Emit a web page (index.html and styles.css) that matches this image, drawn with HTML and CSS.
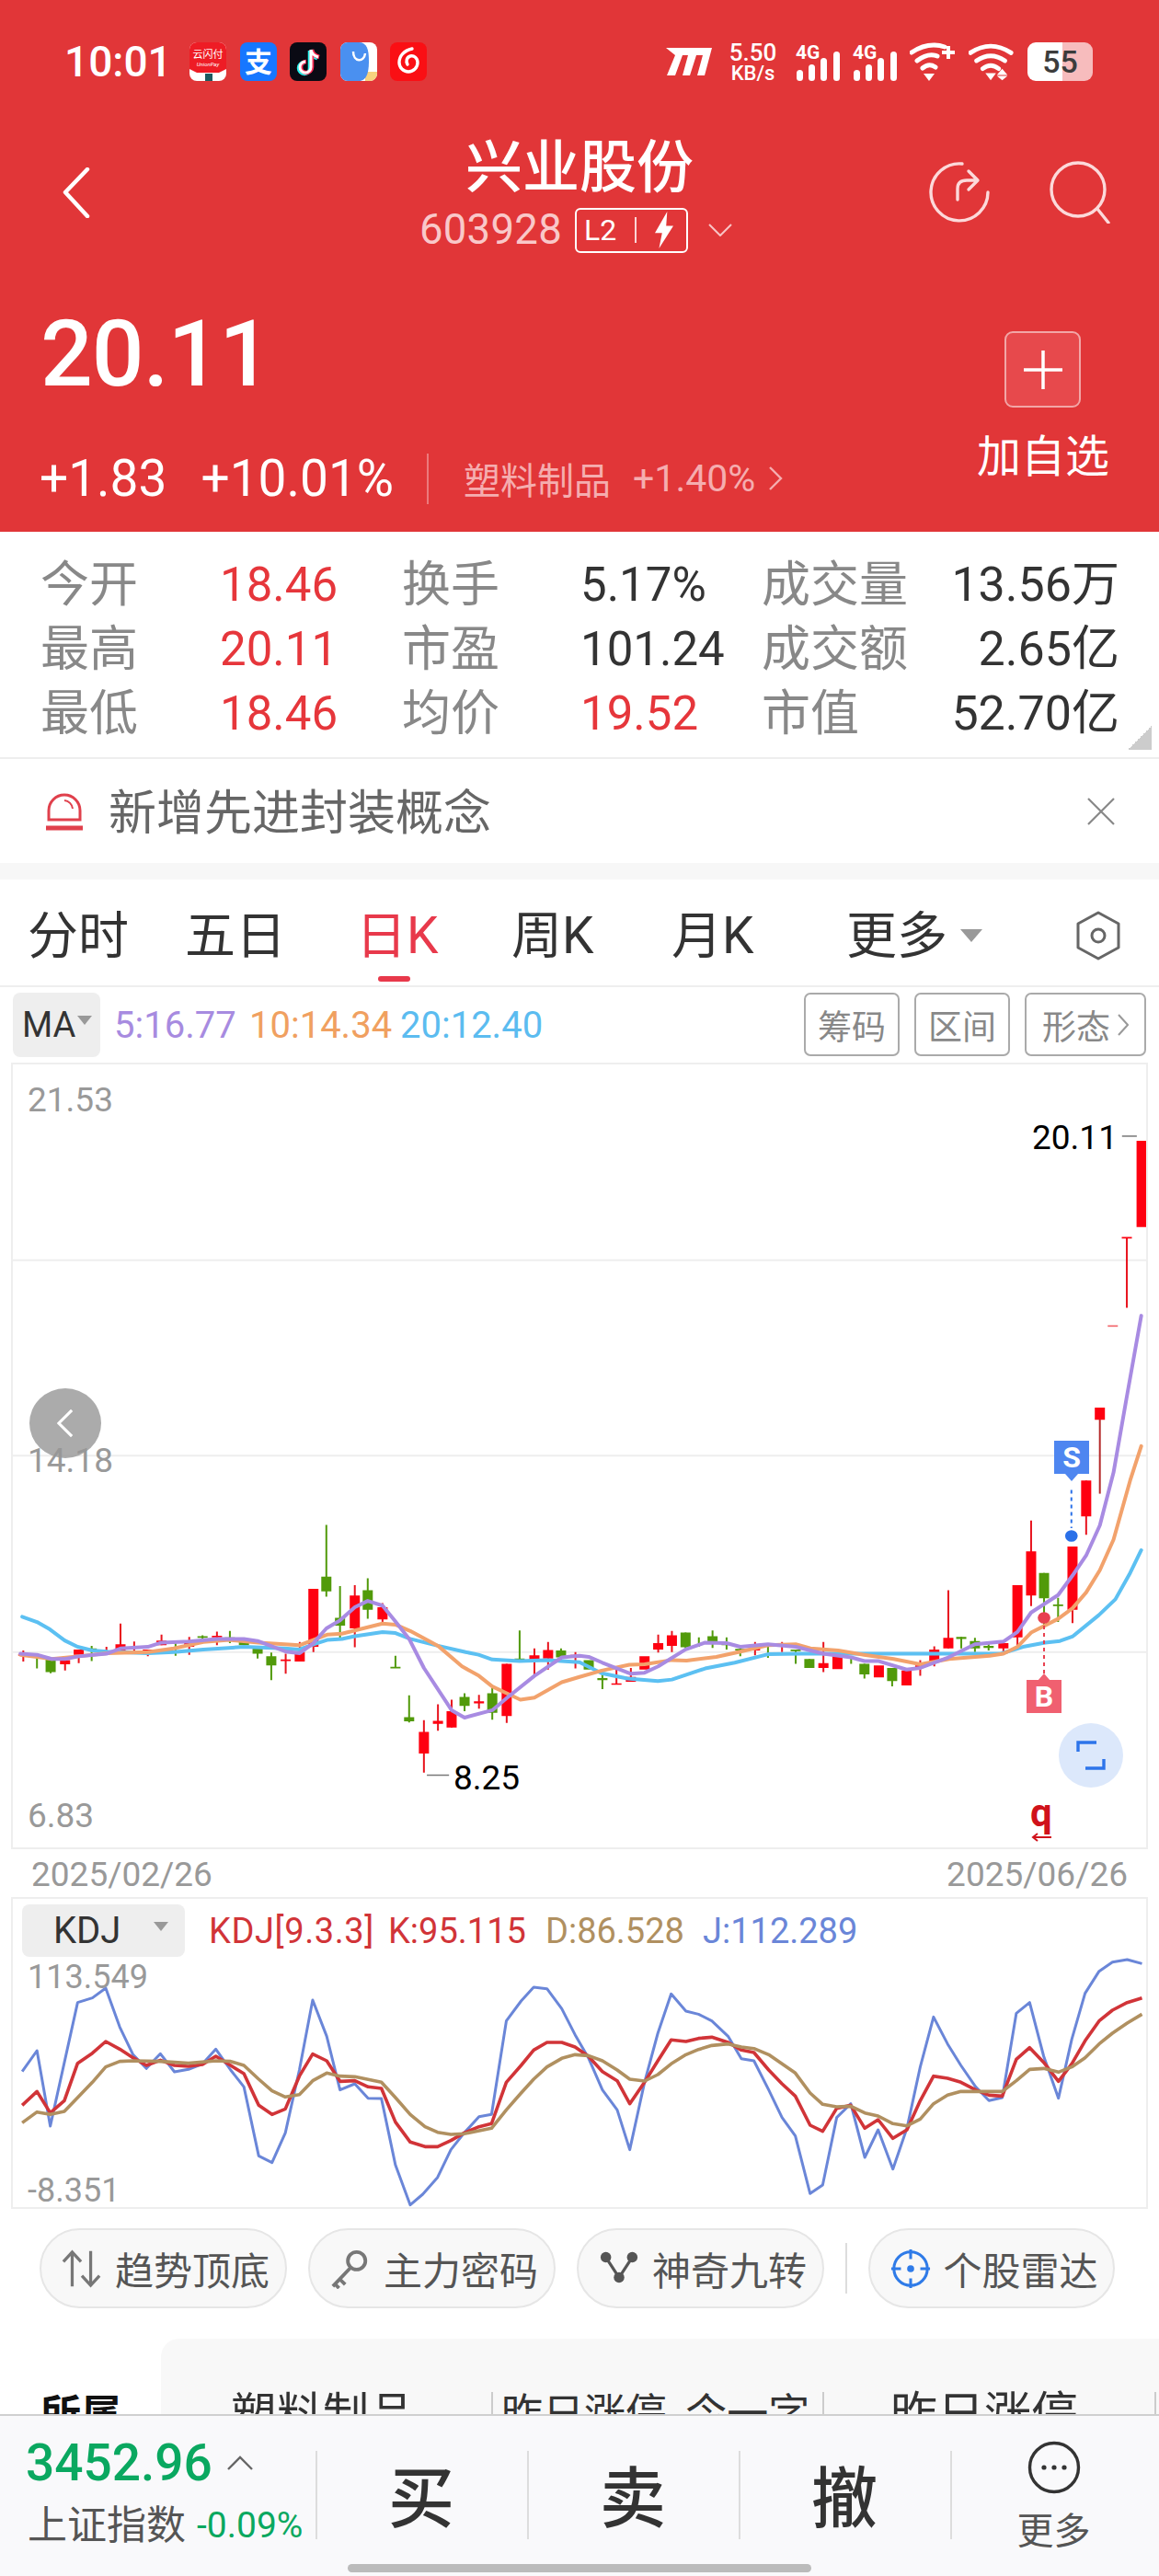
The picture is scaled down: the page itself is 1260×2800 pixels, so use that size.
FILE: index.html
```html
<!DOCTYPE html>
<html lang="zh-CN">
<head>
<meta charset="utf-8">
<title>兴业股份</title>
<link rel="stylesheet" href="styles.css">
</head>
<body>
<div class="page">
  <header class="hero">
    <div class="status">
      <span class="clock">10:01</span>
      <div class="apps">
        <svg class="app" viewBox="0 0 40 42"><rect width="40" height="42" rx="8" fill="#fff"/><path d="M0 8a8 8 0 0 1 8-8h24a8 8 0 0 1 8 8v21l-8 4H8l-8-4z" fill="#ee1c25"/><text x="20" y="17" class="app-t1">云闪付</text><text x="20" y="26" class="app-t2">UnionPay</text><rect x="17" y="34" width="8" height="8" fill="#1c5a60"/></svg>
        <svg class="app" viewBox="0 0 40 42"><rect width="40" height="42" rx="8" fill="#1677ff"/><text x="20" y="32" class="app-t3">支</text></svg>
        <svg class="app" viewBox="0 0 40 42"><rect width="40" height="42" rx="8" fill="#0a0a14"/><path d="M23 8v19a6 6 0 1 1-6-6M23 8c1 5 4 7 8 8" fill="none" stroke="#25f4ee" stroke-width="4.5" transform="translate(-1 1)"/><path d="M23 8v19a6 6 0 1 1-6-6M23 8c1 5 4 7 8 8" fill="none" stroke="#fe2c55" stroke-width="4.5" transform="translate(1 0)"/><path d="M23 8v19a6 6 0 1 1-6-6M23 8c1 5 4 7 8 8" fill="none" stroke="#fff" stroke-width="3"/></svg>
        <svg class="app" viewBox="0 0 40 42"><rect width="40" height="42" rx="8" fill="#fff"/><path d="M27 32h13v2a8 8 0 0 1-8 8h-5z" fill="#f7d27e"/><path d="M8 0h12c9 0 11 8 11 20s-2 22-11 22H8a8 8 0 0 1-8-8V8a8 8 0 0 1 8-8z" fill="#4a90f0"/><path d="M14 10c0 12 12 12 13 2" fill="none" stroke="#fff" stroke-width="2.5"/></svg>
        <svg class="app" viewBox="0 0 40 42"><rect width="40" height="42" rx="8" fill="#fa0f14"/><path d="M24 7c-9 2-14 8-14 15a10 10 0 0 0 20 0c0-5-4-8-8-7-4 1-5 6-3 9" fill="none" stroke="#fff" stroke-width="3.4" stroke-linecap="round"/></svg>
      </div>
      <div class="sysicons">
        <svg class="sys-logo" viewBox="0 0 50 30"><path d="M0 0H50L42 30H34L40 8H33L26 30H18L24 8H18L10 30H1L10 8Z" fill="#fff"/></svg>
        <svg class="speed" viewBox="0 0 53 42"><text x="26.5" y="20" class="speed-a">5.50</text><text x="26.5" y="41" class="speed-b">KB/s</text></svg>
        <svg class="sig" viewBox="0 0 48 42"><text x="0" y="18" class="sig-t">4G</text><rect x="1" y="30" width="7" height="12" rx="3.5"/><rect x="14" y="24" width="7" height="18" rx="3.5"/><rect x="27" y="17" width="7" height="25" rx="3.5"/><rect x="41" y="10" width="7" height="32" rx="3.5"/></svg>
        <svg class="sig" viewBox="0 0 48 42"><text x="0" y="18" class="sig-t">4G</text><rect x="1" y="30" width="7" height="12" rx="3.5"/><rect x="14" y="24" width="7" height="18" rx="3.5"/><rect x="27" y="17" width="7" height="25" rx="3.5"/><rect x="41" y="10" width="7" height="32" rx="3.5"/></svg>
        <svg class="wifi" viewBox="0 0 50 42"><path d="M2 11Q20 -1 38 5M8 20Q20 11 30 15M14 28Q21 22 28 27" fill="none" stroke="#fff" stroke-width="5" stroke-linecap="round"/><path d="M21 42l-6-8h12z" fill="#fff"/><path d="M35 11H49M42 4V18" stroke="#fff" stroke-width="4"/></svg>
        <svg class="wifi" viewBox="0 0 52 42"><path d="M2 11Q25 -4 48 11M9 20Q25 9 41 20M16 29Q25 22 34 29" fill="none" stroke="#fff" stroke-width="5" stroke-linecap="round"/><path d="M25 42l-6-8h12z" fill="#fff"/><path d="M38 29l6 7H32zM38 42l6-5H32z" fill="#fff"/></svg>
        <div class="battery"><span>55</span></div>
      </div>
    </div>

    <div class="nav">
      <svg class="nav-back" viewBox="0 0 30 55"><path d="M27 2 3 27l24 26" fill="none" stroke="#fff" stroke-width="4.5" stroke-linecap="round" stroke-linejoin="round"/></svg>
      <div class="nav-mid">
        <h1 class="title">兴业股份</h1>
        <div class="code-row">
          <span class="code">603928</span>
          <span class="l2"><span class="l2-t">L2</span><i class="l2-sep"></i><svg class="bolt" viewBox="0 0 20 36"><path d="M13 0 1 21h7L5 36l14-22h-7z" fill="#fff"/></svg></span>
          <svg class="code-chev" viewBox="0 0 26 14"><path d="M1 1l12 12L25 1" fill="none" stroke="#f8c4c5" stroke-width="2"/></svg>
        </div>
      </div>
      <div class="nav-right">
        <svg class="nav-ico" viewBox="0 0 66 68"><path d="M36 3A31 31 0 1 0 64 34" fill="none" stroke="#fcd9da" stroke-width="3.4" stroke-linecap="round"/><path d="M31 42V30Q31 21 41 21H52M43 11l10 10-10 10" fill="none" stroke="#fcd9da" stroke-width="3.4" stroke-linecap="round" stroke-linejoin="round"/></svg>
        <svg class="nav-ico" viewBox="0 0 66 68"><circle cx="31" cy="31" r="29" fill="none" stroke="#fcd9da" stroke-width="3.4"/><path d="M52 52l12 15" stroke="#fcd9da" stroke-width="3.4" stroke-linecap="round"/></svg>
      </div>
    </div>

    <div class="quote">
      <div class="quote-l">
        <div class="price">20.11</div>
        <div class="changes">
          <span class="chg">+1.83</span>
          <span class="chg">+10.01%</span>
          <i class="chg-sep"></i>
          <span class="sector-n">塑料制品</span>
          <span class="sector-v">+1.40%</span>
          <svg class="sector-c" viewBox="0 0 16 28"><path d="M2 2l12 12L2 26" fill="none" stroke="#f5adaf" stroke-width="2.4"/></svg>
        </div>
      </div>
      <div class="quote-r">
        <div class="add-btn"><svg class="add-plus" viewBox="0 0 42 42"><path d="M21 0V42M0 21H42" stroke="#fff" stroke-width="3.5"/></svg></div>
        <div class="add-t">加自选</div>
      </div>
    </div>
  </header>

  <section class="stats">
    <span class="s-l">今开</span><span class="s-v up">18.46</span><span class="s-l">换手</span><span class="s-v">5.17%</span><span class="s-l">成交量</span><span class="s-v end">13.56万</span>
    <span class="s-l">最高</span><span class="s-v up">20.11</span><span class="s-l">市盈</span><span class="s-v">101.24</span><span class="s-l">成交额</span><span class="s-v end">2.65亿</span>
    <span class="s-l">最低</span><span class="s-v up">18.46</span><span class="s-l">均价</span><span class="s-v up">19.52</span><span class="s-l">市值</span><span class="s-v end">52.70亿</span>
    <i class="corner"></i>
  </section>

  <section class="notice">
    <svg class="siren" viewBox="0 0 40 42"><path d="M3 30V20a17 17 0 0 1 34 0v10z" fill="none" stroke="#e0404c" stroke-width="3"/><path d="M20 9a10 10 0 0 1 9 9" fill="none" stroke="#e0404c" stroke-width="2"/><path d="M0 39H40" stroke="#e0404c" stroke-width="5"/></svg>
    <span class="notice-t">新增先进封装概念</span>
    <svg class="notice-x" viewBox="0 0 30 30"><path d="M1 1l28 28M29 1L1 29" stroke="#888" stroke-width="2.2"/></svg>
  </section>
  <div class="band"></div>

  <nav class="tabs">
    <span class="tab">分时</span>
    <span class="tab">五日</span>
    <span class="tab active">日K</span>
    <span class="tab">周K</span>
    <span class="tab">月K</span>
    <span class="tab more">更多<i class="tab-caret"></i></span>
    <svg class="hex" viewBox="0 0 48 54"><path d="M24 2 46 14V40L24 52 2 40V14Z" fill="none" stroke="#666" stroke-width="3" stroke-linejoin="round"/><circle cx="24" cy="27" r="7" fill="none" stroke="#666" stroke-width="3"/></svg>
  </nav>

  <div class="ma-row">
    <div class="pill ma-pill">MA<i class="mini-caret"></i></div>
    <span class="ma5">5:16.77</span><span class="ma10">10:14.34</span><span class="ma20">20:12.40</span>
    <div class="ma-btns">
      <span class="ma-btn">筹码</span>
      <span class="ma-btn">区间</span>
      <span class="ma-btn wide">形态<svg class="ma-chev" viewBox="0 0 12 24"><path d="M1 1l10 11L1 23" fill="none" stroke="#999" stroke-width="2"/></svg></span>
    </div>
  </div>

  <section class="chart">
    <svg class="chart-svg" viewBox="34.8 12.2 3066.4 1482.5" preserveAspectRatio="none">
      <path class="grid" d="M34 383H3102M34 753H3102M34 1125H3102"/>
      <path class="dash" d="M1155 1358H1215"/>
      <g>
        <path class="wick-r" d="M63 1122V1143M176 1138V1160M213 1120V1146M288 1115V1130M326 1071V1125M363 1105V1125M400 1120V1133M437 1092V1112M512 1096V1130M587 1086V1112M773 1128V1166M811 1106V1143M848 1005V1125M960 998V1116M1035 1032V1070M1147 1254V1353M1185 1224V1274M1222 1215V1268M1296 1206V1232M1371 1147V1259M1446 1118V1170M1483 1106V1158M1557 1125V1156"/>
        <path class="wick-g" d="M100 1133V1156M137 1138V1165M248 1113V1142M475 1103V1132M548 1093V1105M622 1085V1108M660 1100V1112M697 1118V1137M734 1126V1178M883 884V1020M920 1000V1098M995 985V1062M1070 1132V1155M1107 1207V1258M1257 1203V1237M1332 1188V1253M1406 1084V1141M1518 1118V1135"/>
        <path class="body-r" d="M63 1129V1132M176 1140V1148M213 1120V1130M326 1110V1125M400 1120V1126M437 1103V1112M512 1108V1115M587 1094V1097M773 1139V1142M811 1125V1143M848 1005V1115M960 1018V1080M1035 1040V1063M1147 1276V1317M1185 1255V1261M1222 1237V1268M1296 1218V1222M1371 1147V1246M1446 1131V1140M1483 1121V1137M1557 1130V1134"/>
        <path class="body-g" d="M137 1138V1163M248 1118V1121M475 1105V1108M548 1095V1098M622 1097V1100M660 1105V1112M697 1118V1128M734 1133V1150M883 982V1010M920 1060V1075M995 1008V1045M1070 1153V1156M1107 1248V1256M1257 1210V1227M1332 1203V1240M1406 1137V1141M1518 1122V1135"/>
      </g>
      <g transform="translate(1568 0)">
        <path class="dash" d="M1468 148H1508"/>
        <path class="wick-r" d="M100 1155V1186M139 1155V1181M213 1092V1126M250 1085V1125M475 1106V1131M548 1106V1125M660 1106V1163M922 1140V1170M960 1114V1152M998 1008V1118M1147 1106V1125M1185 998V1115M1222 876V1038M1334 925V1070M1371 800V903M1481 340V473"/>
        <path class="wick-d" d="M1408 662V825"/>
        <path class="wick-g" d="M62 1165V1195M287 1088V1118M323 1097V1115M360 1084V1117M398 1097V1120M435 1118V1133M510 1108V1136M585 1120V1147M622 1138V1155M735 1135V1147M771 1147V1175M846 1155V1190M1033 1096V1118M1070 1098V1125M1107 1105V1122M1257 975V1075M1295 1022V1068"/>
        <path class="body-r" d="M100 1184V1187M139 1172V1181M176 1133V1158M213 1108V1120M250 1093V1113M475 1118V1122M660 1146V1155M698 1128V1157M810 1150V1173M885 1160V1188M922 1150V1155M960 1120V1143M998 1098V1118M1147 1108V1118M1185 998V1097M1222 934V1018M1334 925V1045M1371 800V868M1408 662V685M1481 339V342M1521 157V320"/>
        <path class="body-l" d="M1443 506V509"/>
        <path class="body-g" d="M25 1140V1158M62 1174V1178M287 1088V1116M360 1095V1108M398 1108V1112M435 1119V1122M585 1120V1123M622 1138V1155M771 1147V1167M846 1155V1180M1033 1096V1100M1070 1104V1118M1107 1113V1117M1257 975V1023M1295 1035V1038"/>
      </g>
      <polyline class="ma-b" points="60,1058 100,1068 135,1082 175,1103 210,1115 250,1122 290,1124 400,1127 470,1125 550,1120 660,1115 770,1118 810,1120 850,1110 885,1102 925,1100 960,1095 1035,1087 1070,1089 1110,1100 1185,1113 1260,1125 1295,1130 1332,1139 1406,1142 1480,1140 1568,1144 1628,1165 1698,1175 1780,1180 1818,1177 1908,1156 1988,1145 2078,1129 2168,1128 2468,1128 2708,1128 2768,1115 2828,1107 2868,1104 2903,1095 2973,1055 3018,1025 3058,975 3088,932"/>
      <polyline class="ma-o" points="55,1130 100,1134 140,1138 210,1133 290,1127 400,1125 470,1118 550,1106 620,1102 700,1107 810,1112 885,1092 925,1090 1035,1071 1070,1073 1110,1085 1185,1113 1250,1152 1296,1170 1332,1190 1371,1203 1408,1215 1446,1211 1520,1182 1568,1172 1628,1160 1703,1149 1744,1148 1818,1140 1858,1141 1938,1134 1998,1125 2078,1112 2153,1110 2193,1118 2268,1122 2338,1130 2418,1138 2490,1148 2568,1138 2678,1132 2715,1128 2753,1115 2790,1088 2863,1062 2902,1042 2939,1012 2976,970 3013,912 3058,800 3088,735"/>
      <polyline class="ma-p" points="55,1128 100,1130 140,1138 176,1138 213,1133 288,1128 326,1118 400,1115 437,1107 512,1105 587,1100 660,1100 697,1104 773,1124 811,1127 848,1108 883,1080 920,1065 960,1040 995,1028 1035,1037 1070,1067 1107,1100 1147,1155 1222,1235 1257,1249 1332,1235 1371,1212 1446,1170 1520,1135 1568,1132 1593,1134 1630,1145 1707,1166 1744,1164 1781,1152 1855,1120 1908,1107 1966,1108 2003,1115 2078,1110 2153,1115 2228,1128 2303,1135 2339,1142 2378,1142 2453,1158 2490,1155 2566,1135 2638,1110 2715,1105 2753,1087 2790,1050 2863,1017 2902,980 2939,942 2976,885 3013,785 3048,645 3088,488"/>
      <g transform="translate(1568 0)">
        <path class="dash-b" d="M1331 818V890"/>
        <ellipse class="dot-b" cx="1331" cy="905" rx="17" ry="11"/>
        <path class="dash-r" d="M1257 1075V1168"/>
        <ellipse class="dot-r" cx="1257" cy="1060" rx="17" ry="11"/>
      </g>
    </svg>
    <span class="c-lab l1">21.53</span>
    <span class="c-lab l2nd">14.18</span>
    <span class="c-lab l3">6.83</span>
    <span class="mark m-low">8.25</span>
    <span class="mark m-high">20.11</span>
    <div class="prev-btn"><svg class="prev-ico" viewBox="0 0 20 36"><path d="M18 2 2 18l16 16" fill="none" stroke="#fff" stroke-width="3.5"/></svg></div>
    <div class="badge b-s">S</div>
    <div class="badge b-b">B</div>
    <div class="full-btn"><svg class="full-ico" viewBox="0 0 32 32"><path d="M2 12V2H22M30 20V30H10" fill="none" stroke="#2d74ea" stroke-width="3.4"/></svg></div>
    <div class="q-mark"><span class="q-t">q</span><svg class="q-arrow" viewBox="0 0 22 10"><path d="M22 5H2M7 1 2 5l5 4" fill="none" stroke="#d0121b" stroke-width="2"/></svg></div>
  </section>

  <div class="dates"><span>2025/02/26</span><span>2025/06/26</span></div>

  <section class="kdj">
    <svg class="kdj-svg" viewBox="17.4 42 1533.2 1005" preserveAspectRatio="none">
      <polyline class="k-j" points="30,605 50,537 68,783 105,380 125,365 143,333 162,460 180,550 198,595 217,547 236,606 255,598 274,580 292,532 312,600 330,655 350,880 368,902 386,805 405,600 423,372 442,490 460,665 480,645 498,692 516,693 535,910 555,1040 572,1005 592,950 610,860 628,805 648,752 665,745 685,440 705,375 722,330 740,335 760,400 778,485 796,560 815,665 835,730 852,860 872,640 890,480 908,352 928,408 945,418 963,440 985,490 1003,563 1020,570 1040,665 1058,755 1076,815 1096,1003 1113,975 1132,755 1151,710 1170,885 1188,795 1208,923 1227,790 1245,590 1263,427 1282,515 1300,585 1320,655 1338,700 1356,690 1375,415 1393,380 1412,555 1432,692 1450,500 1468,350 1487,278 1505,248 1525,240 1545,253"/>
      <polyline class="k-k" points="30,715 50,670 68,740 87,700 105,578 125,545 143,507 162,532 180,560 198,585 217,568 236,585 255,588 274,582 292,555 312,585 330,612 350,715 368,745 386,727 405,620 423,548 442,570 460,637 480,635 498,655 516,660 535,770 555,835 575,850 592,850 610,830 628,805 648,785 665,775 685,640 705,585 722,535 740,510 760,510 778,525 796,555 815,605 835,635 852,710 872,640 890,570 908,502 928,507 945,497 963,493 985,510 1003,535 1020,543 1040,600 1058,645 1076,685 1096,780 1113,800 1132,725 1151,715 1170,790 1188,762 1208,823 1227,795 1245,700 1263,620 1282,627 1300,640 1320,665 1338,682 1356,685 1375,565 1393,527 1412,575 1432,637 1450,580 1468,505 1487,440 1505,405 1525,380 1545,365"/>
      <polyline class="k-d" points="30,772 50,737 68,745 87,735 105,690 125,640 143,590 162,572 180,570 217,572 255,578 292,570 312,572 330,585 350,630 368,668 386,688 405,680 423,635 442,610 460,620 480,622 516,640 535,690 555,745 575,785 592,803 610,810 628,808 665,790 685,730 705,675 722,630 740,590 760,562 778,550 796,553 815,570 835,600 852,630 872,636 890,615 908,580 928,550 945,533 963,520 985,515 1003,525 1020,530 1040,550 1076,610 1096,675 1113,712 1132,720 1151,718 1170,740 1188,750 1208,775 1227,782 1245,760 1263,710 1282,682 1300,670 1338,670 1356,670 1375,635 1393,598 1412,595 1432,607 1450,590 1468,560 1487,515 1505,480 1525,447 1545,418"/>
    </svg>
    <div class="kdj-head">
      <div class="pill kdj-pill">KDJ<i class="mini-caret kdj-caret"></i></div>
      <span class="kdj-k1">KDJ[9.3.3]</span><span class="kdj-k2">K:95.115</span><span class="kdj-d">D:86.528</span><span class="kdj-j">J:112.289</span>
    </div>
    <span class="c-lab k1">113.549</span>
    <span class="c-lab k2">-8.351</span>
  </section>

  <div class="chips">
    <div class="chip"><svg class="chip-ico" viewBox="0 0 46 46"><path d="M14 43V4M4 15 14 4l10 11" fill="none" stroke="#777" stroke-width="3.4" transform="translate(-2 0)"/><path d="M33 3V42M23 31l10 11 10-11" fill="none" stroke="#777" stroke-width="3.4"/></svg>趋势顶底</div>
    <div class="chip"><svg class="chip-ico" viewBox="0 0 46 46"><circle cx="30" cy="14" r="10" fill="none" stroke="#777" stroke-width="4"/><path d="M23 22 3 43M11 35l6 6M5 40l5 5" fill="none" stroke="#777" stroke-width="4"/></svg>主力密码</div>
    <div class="chip"><svg class="chip-ico" viewBox="0 0 46 46"><path d="M8 10 23 33 38 10" fill="none" stroke="#555" stroke-width="3.4"/><circle cx="8" cy="10" r="6" fill="#555"/><circle cx="38" cy="10" r="6" fill="#555"/><circle cx="23" cy="33" r="6" fill="#555"/></svg>神奇九转</div>
    <i class="chip-sep"></i>
    <div class="chip"><svg class="chip-ico" viewBox="0 0 46 46"><circle cx="23" cy="23" r="19" fill="none" stroke="#2f7be8" stroke-width="3.2"/><path d="M23 1v11M23 34v11M1 23h11M34 23h11" stroke="#2f7be8" stroke-width="3.2"/><circle cx="23" cy="23" r="4" fill="#2f7be8"/></svg>个股雷达</div>
  </div>

  <section class="belong">
    <span class="belong-t">所属</span>
    <div class="belong-p">
      <span class="b-a">塑料制品</span><i class="b-sep"></i>
      <span class="b-b2">昨日涨停_今一字</span><i class="b-sep"></i>
      <span class="b-c">昨日涨停</span><i class="b-sep"></i>
    </div>
  </section>

  <footer class="bar">
    <div class="idx">
      <div class="idx-a"><span class="idx-num">3452.96</span><svg class="idx-car" viewBox="0 0 28 16"><path d="M1 15 14 2l13 13" fill="none" stroke="#666" stroke-width="2.4"/></svg></div>
      <div class="idx-b"><span class="idx-name">上证指数</span><span class="idx-pct">-0.09%</span></div>
    </div>
    <div class="act">买</div>
    <div class="act">卖</div>
    <div class="act">撤</div>
    <div class="act act-more">
      <svg class="more-ico" viewBox="0 0 58 58"><circle cx="29" cy="29" r="26.5" fill="none" stroke="#333" stroke-width="3.4"/><circle cx="18" cy="29" r="2.6" fill="#333"/><circle cx="29" cy="29" r="2.6" fill="#333"/><circle cx="40" cy="29" r="2.6" fill="#333"/></svg>
      <span class="more-t">更多</span>
    </div>
    <i class="home"></i>
  </footer>
</div>
</body>
</html>
```

FILE: styles.css
```css
* { box-sizing: border-box; }
html, body { margin: 0; padding: 0; }
body { font-family: Roboto, "Noto Sans CJK SC", sans-serif; background: #fff; color: #333; }
i { display: block; font-style: normal; }
svg { display: block; }
.page { position: relative; width: 1260px; height: 2800px; overflow: hidden; background: #fff; }

/* header */
.hero { height: 578px; padding-top: 46px; background: #e13638; color: #fff; }
.status { display: flex; align-items: center; height: 42px; padding: 0 72px 0 70px; }
.clock { font-size: 46px; font-weight: 500; line-height: 42px; width: 136px; }
.apps { display: flex; gap: 14.5px; }
.app { width: 40px; height: 42px; }
.app-t1 { font-size: 11px; fill: #fff; text-anchor: middle; }
.app-t2 { font-size: 6px; fill: #fff; text-anchor: middle; font-style: italic; }
.app-t3 { font-size: 30px; fill: #fff; text-anchor: middle; font-weight: 700; }
.sysicons { display: flex; align-items: center; margin-left: auto; }
.sys-logo { width: 50px; height: 30px; margin-right: 18px; }
.speed { width: 53px; height: 42px; margin-right: 20px; overflow: visible; }
.speed-a { font-size: 26px; font-weight: 500; fill: #fff; text-anchor: middle; }
.speed-b { font-size: 22px; font-weight: 500; fill: #fff; text-anchor: middle; }
.sig { width: 48px; height: 42px; margin-right: 14px; fill: #fff; }
.sig-t { font-size: 21px; font-weight: 700; fill: #fff; }
.wifi { width: 50px; height: 42px; margin-right: 14px; }
.battery { width: 71px; height: 42px; border-radius: 9px; background: linear-gradient(90deg, #fff 0 53%, #f7bcbd 53% 100%); display: flex; align-items: center; justify-content: center; }
.battery span { font-size: 34px; font-weight: 500; color: #3c3c3c; line-height: 42px; }

.nav { display: grid; grid-template-columns: 1fr auto 1fr; height: 190px; padding: 0 53px; }
.nav-back { width: 30px; height: 55px; margin: 94px 0 0 15px; }
.nav-mid { display: flex; flex-direction: column; align-items: center; padding-top: 64px; }
.title { margin: 0; font-size: 62px; line-height: 62px; font-weight: 500; }
.code-row { display: flex; align-items: center; gap: 14px; height: 50px; margin: 11px 0 0 -8px; }
.code { font-size: 45.5px; color: #f9c8c9; line-height: 50px; letter-spacing: .3px; }
.l2 { display: flex; align-items: center; width: 123px; height: 49px; border: 2px solid #fff; border-radius: 6px; padding-left: 8px; }
.l2-t { font-size: 32px; line-height: 40px; width: 55px; }
.l2-sep { width: 2px; height: 28px; background: #fbd5d6; margin-right: 18px; }
.bolt { width: 24px; height: 40px; }
.code-chev { width: 26px; height: 14px; margin-left: 8px; }
.nav-right { display: flex; justify-self: end; gap: 65px; margin-top: 87px; }
.nav-ico { width: 66px; height: 68px; }

.quote { display: flex; justify-content: space-between; padding: 0 54px 0 44px; }
.price { font-size: 100px; line-height: 100px; font-weight: 500; margin-top: 57px; letter-spacing: -1px; }
.changes { display: flex; align-items: center; margin: 60px 0 0 -1px; height: 50px; }
.chg { font-size: 55px; line-height: 50px; margin-right: 37px; }
.chg-sep { width: 2px; height: 55px; background: #ec7a7c; margin: 0 38px 0 -1px; }
.sector-n { font-size: 40px; color: #f5adaf; margin-right: 24px; }
.sector-v { font-size: 41px; color: #f5adaf; margin-right: 14px; }
.sector-c { width: 16px; height: 28px; }
.quote-r { display: flex; flex-direction: column; align-items: center; }
.add-btn { width: 83px; height: 83px; margin-top: 82px; background: #e7494c; border: 2px solid #f2a6a7; border-radius: 9px; display: flex; align-items: center; justify-content: center; }
.add-plus { width: 42px; height: 42px; }
.add-t { font-size: 48px; line-height: 47px; margin-top: 30px; }

/* stats */
.stats { position: relative; display: grid; grid-template-columns: 197px 196px 196px 195px 170px 216px; grid-auto-rows: 70px; align-items: center; padding: 23px 0 12px 44px; border-bottom: 2px solid #eee; height: 247px; }
.s-l { font-size: 53px; line-height: 70px; color: #888; white-space: nowrap; }
.s-v { font-size: 51px; line-height: 70px; color: #333; margin-left: -2px; }
.s-v.up { color: #e6363b; }
.s-v.end { font-size: 52px; text-align: right; margin: 0 -3px 0 0; }
.corner { position: absolute; right: 8px; bottom: 8px; width: 26px; height: 26px; background: linear-gradient(135deg, transparent 50%, #ccc 50%); }

.notice { display: flex; align-items: center; height: 113px; padding: 0 48px 0 50px; }
.siren { width: 40px; height: 42px; margin-right: 28px; }
.notice-t { font-size: 52px; color: #666; line-height: 60px; padding-top: 6px; }
.notice-x { width: 30px; height: 30px; margin-left: auto; }
.band { height: 18px; background: #f7f7f7; }

/* tabs */
.tabs { display: grid; grid-template-columns: 171px 186px 169px 174px 190px 1fr auto; align-items: center; height: 117px; padding: 6px 42px 0 30px; border-bottom: 2px solid #eee; }
.tab { position: relative; font-size: 55px; line-height: 60px; color: #333; }
.tab.active { color: #e8394b; }
.tab.active::after { content: ""; position: absolute; left: 24px; top: 74px; width: 35px; height: 6px; border-radius: 3px; background: #e8394b; }
.tab.more { display: flex; align-items: center; gap: 14px; }
.tab-caret { width: 0; height: 0; border-left: 12px solid transparent; border-right: 12px solid transparent; border-top: 14px solid #999; }
.hex { width: 48px; height: 54px; }

.ma-row { display: flex; align-items: flex-start; height: 82px; padding: 6px 14px 0 14px; }
.pill { display: flex; align-items: center; background: #eee; border-radius: 8px; color: #333; }
.ma-pill { width: 95px; height: 70px; padding-left: 10px; font-size: 38px; margin-right: 15px; gap: 2px; }
.mini-caret { width: 0; height: 0; border-left: 8px solid transparent; border-right: 8px solid transparent; border-top: 10px solid #999; margin-top: -10px; }
.ma5, .ma10, .ma20 { font-size: 40px; line-height: 72px; }
.ma5 { color: #a78be0; width: 147px; }
.ma10 { color: #f0a060; width: 164px; }
.ma20 { color: #5bbcf0; }
.ma-btns { display: flex; gap: 16px; margin-left: auto; }
.ma-btn { display: flex; align-items: center; justify-content: center; gap: 8px; width: 104px; height: 69px; border: 2px solid #aaa; border-radius: 7px; font-size: 37px; color: #888; }
.ma-btn.wide { width: 132px; }
.ma-chev { width: 12px; height: 24px; }

/* chart */
.chart { position: relative; margin: 0 12px; border: 2px solid #eee; }
.chart-svg { width: 1232px; height: 851px; }
.grid { stroke: #eee; stroke-width: 2px; fill: none; vector-effect: non-scaling-stroke; }
.dash { stroke: #777; stroke-width: 1.5px; fill: none; vector-effect: non-scaling-stroke; }
.wick-r, .wick-g, .wick-d, .body-r, .body-g, .body-l, .dash-b, .dash-r { fill: none; vector-effect: non-scaling-stroke; }
.wick-r { stroke: #e8141e; stroke-width: 2px; }
.wick-d { stroke: #b52a2a; stroke-width: 2px; }
.wick-g { stroke: #519a0a; stroke-width: 2px; }
.body-r { stroke: #fe0010; stroke-width: 11px; }
.body-l { stroke: #f26a6f; stroke-width: 11px; }
.body-g { stroke: #519a0a; stroke-width: 11px; }
.ma-b, .ma-o, .ma-p { fill: none; stroke-width: 4px; stroke-linejoin: round; stroke-linecap: round; vector-effect: non-scaling-stroke; }
.ma-b { stroke: #5cc0f2; }
.ma-o { stroke: #f2a26c; }
.ma-p { stroke: #a88be2; }
.dash-b { stroke: #2a70e8; stroke-width: 2px; stroke-dasharray: 4 4; }
.dash-r { stroke: #e8404f; stroke-width: 2px; stroke-dasharray: 4 4; }
.dot-b { fill: #2a70e8; }
.dot-r { fill: #e8404f; }
.c-lab { position: absolute; left: 16px; font-size: 37px; line-height: 40px; color: #999; }
.l1 { top: 19px; }
.l2nd { top: 411px; }
.l3 { top: 797px; }
.mark { position: absolute; font-size: 37px; line-height: 40px; color: #000; }
.m-low { left: 479px; top: 756px; }
.m-high { left: 1108px; top: 60px; }
.prev-btn { position: absolute; left: 18px; top: 352px; width: 78px; height: 76px; border-radius: 50%; background: rgba(150,150,150,.8); display: flex; align-items: center; justify-content: center; }
.prev-ico { width: 18px; height: 32px; }
.badge { position: absolute; width: 38px; font-size: 32px; font-weight: 700; line-height: 36px; text-align: center; color: #fff; }
.badge::after { content: ""; position: absolute; left: 12px; width: 14px; height: 8px; background: inherit; }
.b-s { left: 1132px; top: 409px; height: 36px; background: #4e86f0; }
.b-s::after { top: 36px; clip-path: polygon(0 0, 100% 0, 50% 100%); }
.b-b { left: 1102px; top: 669px; height: 36px; background: #f06070; }
.b-b::after { top: -7px; clip-path: polygon(50% 0, 100% 100%, 0 100%); }
.full-btn { position: absolute; left: 1137px; top: 716px; width: 70px; height: 70px; border-radius: 50%; background: #dce8fb; display: flex; align-items: center; justify-content: center; }
.full-ico { width: 32px; height: 32px; }
.q-mark { position: absolute; left: 1106px; top: 795px; display: flex; flex-direction: column; align-items: center; }
.q-t { font-size: 42px; line-height: 38px; font-weight: 700; color: #d0121b; }
.q-arrow { width: 22px; height: 10px; margin-top: 2px; }

.dates { display: flex; justify-content: space-between; height: 52px; padding: 8px 34px 0 34px; font-size: 37px; line-height: 40px; color: #999; }

.kdj { position: relative; margin: 0 12px; border: 2px solid #eee; }
.kdj-svg { width: 1232px; height: 335px; }
.k-j, .k-k, .k-d { fill: none; stroke-linejoin: round; vector-effect: non-scaling-stroke; }
.k-j { stroke: #6a86d8; stroke-width: 3px; }
.k-k { stroke: #d13438; stroke-width: 3.6px; }
.k-d { stroke: #b09060; stroke-width: 3.6px; }
.kdj-head { position: absolute; left: 10px; top: 6px; display: flex; align-items: center; }
.kdj-pill { width: 177px; height: 57px; border-radius: 8px; padding-left: 34px; font-size: 40px; margin-right: 26px; }
.kdj-caret { margin-left: 36px; }
.kdj-k1, .kdj-k2, .kdj-d, .kdj-j { font-size: 38px; line-height: 44px; }
.kdj-k1 { color: #d13438; width: 195px; letter-spacing: .6px; }
.kdj-k2 { color: #d13438; width: 171px; }
.kdj-d { color: #b09060; width: 171px; }
.kdj-j { color: #6a86d8; }
.c-lab.k1 { top: 65px; font-size: 36px; }
.c-lab.k2 { top: 297px; font-size: 36px; }

/* chips */
.chips { display: flex; align-items: center; gap: 23.5px; margin-top: 21px; padding-left: 43px; }
.chip { display: flex; align-items: center; gap: 14px; width: 268.5px; height: 87px; padding-left: 22px; border: 2px solid #e6e6e6; border-radius: 44px; background: #f8f8f8; font-size: 42px; color: #555; }
.chip-ico { width: 44px; height: 44px; flex: none; }
.chip-sep { width: 2px; height: 55px; background: #ddd; margin-right: -1px; }

.belong { display: flex; margin-top: 33px; height: 120px; }
.belong-t { width: 175px; padding: 58px 0 0 44px; font-size: 44px; line-height: 50px; font-weight: 700; color: #111; }
.belong-p { flex: 1; display: flex; padding-top: 58px; background: #f8f8f8; border-radius: 20px 0 0 0; color: #333; font-size: 45px; line-height: 50px; }
.b-a { font-size: 50px; margin-left: 76px; width: 283px; }
.b-sep { width: 2px; height: 50px; background: #ccc; }
.b-b2 { margin-left: 9px; width: 349px; }
.b-c { font-size: 51px; margin-left: 72px; width: 287px; }

/* bottom bar */
.bar { position: absolute; left: 0; right: 0; bottom: 0; height: 176px; display: flex; background: #f9f9fb; border-top: 2px solid #d0d0d0; }
.idx { width: 343px; padding: 23px 0 0 28px; }
.idx-a { display: flex; align-items: center; gap: 16px; height: 56px; }
.idx-num { font-size: 55px; line-height: 56px; font-weight: 500; color: #0aa860; }
.idx-car { width: 28px; height: 16px; }
.idx-b { display: flex; align-items: center; gap: 12px; height: 42px; margin-top: 19px; padding-left: 2px; }
.idx-name { font-size: 43px; line-height: 42px; color: #555; }
.idx-pct { font-size: 39px; line-height: 42px; color: #0aa860; }
.act { width: 230px; padding-top: 55px; font-size: 72px; line-height: 72px; font-weight: 500; color: #333; text-align: center; background: linear-gradient(#ddd, #ddd) left 38px / 2px 96px no-repeat; }
.act-more { width: 225px; padding-top: 27px; display: flex; flex-direction: column; align-items: center; }
.more-ico { width: 58px; height: 58px; }
.more-t { font-size: 40px; line-height: 40px; font-weight: 400; color: #555; margin-top: 21px; }
.home { position: absolute; left: 378px; bottom: 4px; width: 504px; height: 9px; border-radius: 5px; background: #bbb; }
```
